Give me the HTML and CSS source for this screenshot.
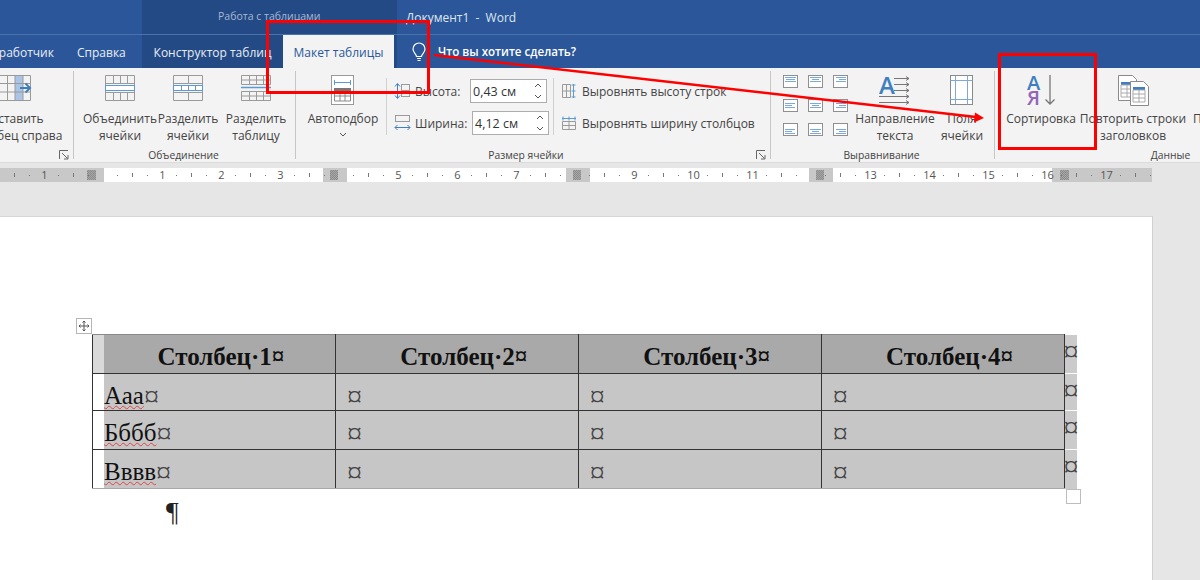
FILE: index.html
```html
<!DOCTYPE html>
<html lang="ru">
<head>
    <meta charset="UTF-8">
    <title>Документ1 - Word</title>
    <link rel="stylesheet" href="styles.css">
</head>
<body>
    <header class="titlebar">
        <div class="title-spacer"></div>
        <div class="context-label">Работа с таблицами</div>
        <div class="doc-title">Документ1 &nbsp;-&nbsp; Word</div>
    </header>

    <nav class="tabs">
        <div class="tab tab-dev">зработчик</div>
        <div class="tab tab-help">Справка</div>
        <div class="tab tab-context">Конструктор таблиц</div>
        <div class="tab tab-active">Макет таблицы</div>
        <div class="tab-end"></div>
        <svg class="bulb" width="16" height="20" viewBox="0 0 16 20" fill="none" stroke="#fff" stroke-width="1.2">
            <path d="M5.5 14.5c0-2.5-3.5-3.8-3.5-7.5a6 6 0 0 1 12 0c0 3.700-3.500 5-3.500 7.500z"/>
            <path d="M6 16.500h4M6.500 18.500h3"/>
        </svg>
        <div class="tell-me">Что вы хотите сделать?</div>
    </nav>

    <section class="ribbon">
        <div class="group group-insert">
            <div class="group-body">
                <div class="rbtn rbtn-insert">
                    <span class="rbtn-icon">
                        <svg width="34" height="28" viewBox="0 0 34 28">
                            <rect x="16" y="1" width="8" height="25" fill="#a9c4e4"/>
                            <path d="M.5.500h31v25H.5zM.5 8.500h31M.5 17h31M8.500.500v25M16 .500v25M24 .500v25" fill="none" stroke="#9a9a9a"/>
                            <path d="M21 13h10M26.500 8.500 31 13l-4.500 4.500" fill="none" stroke="#3f7fbf" stroke-width="2"/>
                        </svg>
                    </span>
                    <span class="rbtn-text">Вставить<br>столбец справа</span>
                </div>
            </div>
            <div class="group-foot">
                <span class="group-label"></span>
                <svg class="launcher" width="10" height="10" viewBox="0 0 10 10" fill="none" stroke="#666"><path d="M.5 9V.500H9M3 3l5.500 5.500M5 9h4V5"/></svg>
            </div>
        </div>

        <div class="group group-merge">
            <div class="group-body">
                <div class="rbtn">
                    <span class="rbtn-icon">
                        <svg width="30" height="26" viewBox="0 0 30 26" fill="none">
                            <path d="M.5.500h29v25H.5zM.5 8.500h29M.5 17.500h29M8.500 .500V8M15.500 .500V8M22.500 .500V8M8.500 18v7.500M15.500 18v7.500M22.500 18v7.500" stroke="#9a9a9a"/>
                            <rect x=".5" y="10.500" width="29" height="5" stroke="#5b9bd5" fill="#fff"/>
                        </svg>
                    </span>
                    <span class="rbtn-text">Объединить<br>ячейки</span>
                </div>
                <div class="rbtn">
                    <span class="rbtn-icon">
                        <svg width="30" height="26" viewBox="0 0 30 26" fill="none">
                            <path d="M.5.500h29v25H.5zM.5 8.500h29M.5 17.500h29M15.500 .500V8M15.500 18v7.500" stroke="#9a9a9a"/>
                            <rect x=".5" y="10.500" width="29" height="5" stroke="#5b9bd5" fill="#fff"/>
                            <path d="M8.500 10v6M15.500 10v6M22.500 10v6" stroke="#5b9bd5"/>
                        </svg>
                    </span>
                    <span class="rbtn-text">Разделить<br>ячейки</span>
                </div>
                <div class="rbtn">
                    <span class="rbtn-icon">
                        <svg width="30" height="26" viewBox="0 0 30 26" fill="none">
                            <path d="M.5.500h29v9H.5zM.5 16.500h29v9H.5zM.5 5h29M.5 21h29M8.500 .500v9M15.500 .500v9M22.500 .500v9M8.500 16.500v9M15.500 16.500v9M22.500 16.500v9" stroke="#9a9a9a"/>
                            <path d="M0 12.500h30" stroke="#5b9bd5" stroke-width="1.500"/>
                        </svg>
                    </span>
                    <span class="rbtn-text">Разделить<br>таблицу</span>
                </div>
            </div>
            <div class="group-foot">
                <span class="group-label">Объединение</span>
            </div>
        </div>

        <div class="group group-size">
            <div class="group-body">
                <div class="rbtn rbtn-autofit">
                    <span class="rbtn-icon">
                        <svg width="24" height="30" viewBox="0 0 24 30" fill="none">
                            <rect x=".5" y=".5" width="22" height="29" fill="#fff" stroke="#9a9a9a"/>
                            <path d="M3 7.500h17M3.500 5v5M19.500 5v5" stroke="#5b9bd5"/>
                            <rect x="3" y="13" width="17" height="3" fill="#777"/>
                            <path d="M3.500 16v10h16V16M3.500 21h16M9 16v10M14 16v10" stroke="#8a8a8a"/>
                        </svg>
                    </span>
                    <span class="rbtn-text">Автоподбор</span>
                    <svg class="chevron" width="8" height="5" viewBox="0 0 8 5" fill="none" stroke="#555"><path d="M1 1l3 3 3-3"/></svg>
                </div>
                <div class="vsep vsep-size"></div>
                <div class="size-col">
                    <div class="size-row">
                        <svg width="17" height="18" viewBox="0 0 17 18" fill="none">
                            <path d="M3.500 2v14M1 4.500l2.500-3 2.500 3M1 13.500l2.500 3 2.500-3" stroke="#3f7fbf"/>
                            <rect x="7.500" y="2.500" width="8" height="6" stroke="#9a9a9a"/>
                            <rect x="7.500" y="8.500" width="8" height="6" stroke="#9a9a9a"/>
                        </svg>
                        <span class="size-label">Высота:</span>
                        <div class="spin">0,43 см
                            <svg class="spin-arrows" width="8" height="16" viewBox="0 0 8 16" fill="none" stroke="#555"><path d="M1 4l3-3 3 3M1 12l3 3 3-3"/></svg>
                        </div>
                    </div>
                    <div class="size-row">
                        <svg width="17" height="18" viewBox="0 0 17 18" fill="none">
                            <rect x="1.500" y="1.500" width="14" height="6" stroke="#9a9a9a"/>
                            <path d="M1 13.500h15M3.500 11 1 13.500 3.500 16M13.500 11 16 13.500 13.500 16" stroke="#3f7fbf"/>
                        </svg>
                        <span class="size-label size-label-wide">Ширина:</span>
                        <div class="spin">4,12 см
                            <svg class="spin-arrows" width="8" height="16" viewBox="0 0 8 16" fill="none" stroke="#555"><path d="M1 4l3-3 3 3M1 12l3 3 3-3"/></svg>
                        </div>
                    </div>
                </div>
                <div class="vsep vsep-even"></div>
                <div class="even-col">
                    <div class="even-row">
                        <svg width="14" height="14" viewBox="0 0 14 14" fill="none">
                            <path d="M.5.500h8v13h-8zM.5 7h8M4.500.500v13" stroke="#9a9a9a"/>
                            <path d="M11.500 0v14M9.500 1h4M9.500 7h4M9.500 13h4" stroke="#5b9bd5"/>
                        </svg>
                        <span>Выровнять высоту строк</span>
                    </div>
                    <div class="even-row">
                        <svg width="14" height="14" viewBox="0 0 14 14" fill="none">
                            <path d="M.5 5.500h13v8H.5zM7 5.500v8M.5 9.500h13" stroke="#9a9a9a"/>
                            <path d="M0 2.500h14M1 .500v4M7 .500v4M13 .500v4" stroke="#5b9bd5"/>
                        </svg>
                        <span>Выровнять ширину столбцов</span>
                    </div>
                </div>
            </div>
            <div class="group-foot">
                <span class="group-label">Размер ячейки</span>
                <svg class="launcher" width="10" height="10" viewBox="0 0 10 10" fill="none" stroke="#666"><path d="M.5 9V.500H9M3 3l5.500 5.500M5 9h4V5"/></svg>
            </div>
        </div>

        <div class="group group-align">
            <div class="group-body">
                <div class="align-grid">
                    <svg class="align-icon" viewBox="0 0 15 13"><rect x=".5" y=".5" width="14" height="12"/><path d="M2 2.500h11M3 4.500h9M2 6.500h11"/></svg>
                    <svg class="align-icon" viewBox="0 0 15 13"><rect x=".5" y=".5" width="14" height="12"/><path d="M2 2.500h11M4 4.500h7M2 6.500h11"/></svg>
                    <svg class="align-icon" viewBox="0 0 15 13"><rect x=".5" y=".5" width="14" height="12"/><path d="M3 2.500h10M6 4.500h7M3 6.500h10"/></svg>
                    <svg class="align-icon" viewBox="0 0 15 13"><rect x=".5" y=".5" width="14" height="12"/><path d="M2 4.500h10M2 6.500h7M2 8.500h10"/></svg>
                    <svg class="align-icon" viewBox="0 0 15 13"><rect x=".5" y=".5" width="14" height="12"/><path d="M2 4.500h11M4 6.500h7M2 8.500h11"/></svg>
                    <svg class="align-icon" viewBox="0 0 15 13"><rect x=".5" y=".5" width="14" height="12"/><path d="M3 4.500h10M6 6.500h7M3 8.500h10"/></svg>
                    <svg class="align-icon" viewBox="0 0 15 13"><rect x=".5" y=".5" width="14" height="12"/><path d="M2 6.500h10M2 8.500h7M2 10.500h10"/></svg>
                    <svg class="align-icon" viewBox="0 0 15 13"><rect x=".5" y=".5" width="14" height="12"/><path d="M2 6.500h11M4 8.500h7M2 10.500h11"/></svg>
                    <svg class="align-icon" viewBox="0 0 15 13"><rect x=".5" y=".5" width="14" height="12"/><path d="M3 6.500h10M6 8.500h7M3 10.500h10"/></svg>
                </div>
                <div class="rbtn rbtn-direction">
                    <span class="rbtn-icon direction-icon">
                        <span class="direction-a">A</span>
                        <svg width="32" height="30" viewBox="0 0 32 30" fill="none" stroke="#777">
                            <path d="M15 3.500h15M15 9.500h15M15 15.500h15M0 21.500h30M0 27.500h30M27 1.500l3 2-3 2M27 7.500l3 2-3 2M27 13.500l3 2-3 2M27 19.500l3 2-3 2M27 25.500l3 2-3 2"/>
                        </svg>
                    </span>
                    <span class="rbtn-text">Направление<br>текста</span>
                </div>
                <div class="rbtn rbtn-margins">
                    <span class="rbtn-icon">
                        <svg width="24" height="30" viewBox="0 0 24 30" fill="none">
                            <rect x=".5" y=".5" width="22" height="29" fill="#fff" stroke="#8a8a8a"/>
                            <path d="M5.500 .500v29M17.500 .500v29M.5 5.500h22M.5 24.500h22" stroke="#7fa8d6"/>
                        </svg>
                    </span>
                    <span class="rbtn-text">Поля<br>ячейки</span>
                </div>
            </div>
            <div class="group-foot">
                <span class="group-label">Выравнивание</span>
            </div>
        </div>

        <div class="group group-data">
            <div class="group-body">
                <div class="rbtn rbtn-sort">
                    <span class="rbtn-icon sort-icon">
                        <span class="sort-letters"><span class="sort-a">А</span><span class="sort-ya">Я</span></span>
                        <svg width="10" height="30" viewBox="0 0 10 30" fill="none" stroke="#777" stroke-width="1.300"><path d="M5 0v29M.5 24.500 5 29l4.500-4.500"/></svg>
                    </span>
                    <span class="rbtn-text">Сортировка</span>
                </div>
                <div class="rbtn rbtn-repeat">
                    <span class="rbtn-icon">
                        <svg width="31" height="31" viewBox="0 0 31 31">
                            <path d="M.5.500h14l4 4v21H.5z" fill="#fff" stroke="#8a8a8a"/>
                            <rect x="3" y="7" width="12" height="3" fill="#3f7fbf"/>
                            <path d="M3 10h12v12H3zM3 14h12M3 18h12M9 10v12" fill="none" stroke="#aaa"/>
                            <path d="M12.500 6.500h13l5 5v19h-18z" fill="#fff" stroke="#8a8a8a"/>
                            <rect x="15" y="12" width="12" height="3" fill="#3f7fbf"/>
                            <path d="M15 15h12v12H15zM15 19h12M15 23h12M21 15v12" fill="none" stroke="#aaa"/>
                        </svg>
                    </span>
                    <span class="rbtn-text">Повторить строки<br>заголовков</span>
                </div>
                <div class="rbtn rbtn-next">
                    <span class="rbtn-icon"></span>
                    <span class="rbtn-text">Преобразовать</span>
                </div>
            </div>
            <div class="group-foot">
                <span class="group-label">Данные</span>
            </div>
        </div>
    </section>

    <div class="ruler">
        <div class="band band-gray band-first"><i class="band-mark"></i></div>
        <div class="band band-white band-long"></div>
        <div class="band band-gray band-gap"><i class="band-mark"></i></div>
        <div class="band band-white band-long"></div>
        <div class="band band-gray band-gap"><i class="band-mark"></i></div>
        <div class="band band-white band-long"></div>
        <div class="band band-gray band-gap"><i class="band-mark"></i></div>
        <div class="band band-white band-long"></div>
        <div class="band band-gray band-last"><i class="band-mark"></i></div>
        <div class="ruler-scale">
            <span>1</span><span></span><span>1</span><span>2</span><span>3</span><span></span><span>5</span><span>6</span><span>7</span><span></span><span>9</span><span>10</span><span>11</span><span></span><span>13</span><span>14</span><span>15</span><span>16</span><span>17</span>
        </div>
    </div>

    <main class="workspace">
        <div class="page">
            <div class="table-wrap">
                <svg class="move-handle" width="17" height="17" viewBox="0 0 17 17" fill="none">
                    <rect x=".5" y=".5" width="15" height="15" fill="#fff" stroke="#b5b5b5"/>
                    <path d="M8 3v10M3 8h10M6.500 4.500 8 3l1.500 1.500M6.500 11.500 8 13l1.500-1.500M4.500 6.500 3 8l1.500 1.500M11.500 6.500 13 8l-1.500 1.500" stroke="#555"/>
                </svg>
                <table class="doc-table">
                    <tr class="row-head">
                        <th class="col-first">Столбец·1¤</th>
                        <th>Столбец·2¤</th>
                        <th>Столбец·3¤</th>
                        <th>Столбец·4¤</th>
                        <td class="row-end"><span class="cell-mark">¤</span></td>
                    </tr>
                    <tr class="row-a">
                        <td class="col-first"><span class="spell">Ааа</span><span class="cell-mark">¤</span></td>
                        <td><span class="cell-mark">¤</span></td>
                        <td><span class="cell-mark">¤</span></td>
                        <td><span class="cell-mark">¤</span></td>
                        <td class="row-end"><span class="cell-mark">¤</span></td>
                    </tr>
                    <tr class="row-b">
                        <td class="col-first"><span class="spell">Бббб</span><span class="cell-mark">¤</span></td>
                        <td><span class="cell-mark">¤</span></td>
                        <td><span class="cell-mark">¤</span></td>
                        <td><span class="cell-mark">¤</span></td>
                        <td class="row-end"><span class="cell-mark">¤</span></td>
                    </tr>
                    <tr class="row-b">
                        <td class="col-first"><span class="spell">Вввв</span><span class="cell-mark">¤</span></td>
                        <td><span class="cell-mark">¤</span></td>
                        <td><span class="cell-mark">¤</span></td>
                        <td><span class="cell-mark">¤</span></td>
                        <td class="row-end"><span class="cell-mark">¤</span></td>
                    </tr>
                </table>
                <div class="resize-handle"></div>
            </div>
            <p class="pilcrow">¶</p>
        </div>
    </main>

    <!-- red marks drawn over the screenshot -->
    <div class="mark mark-tab"></div>
    <div class="mark mark-sort"></div>
    <svg class="mark-arrow" width="1200" height="580" viewBox="0 0 1200 580">
        <path d="M434 55 976 117" stroke="#f00" stroke-width="2.500"/>
        <path d="M984 118 975 112.500 974 122.500z" fill="#f00"/>
    </svg>
</body>
</html>
```

FILE: styles.css
```css
* {
    margin: 0;
    padding: 0;
    box-sizing: border-box;
}

body {
    position: relative;
    width: 1200px;
    height: 580px;
    overflow: hidden;
    background-color: #e6e6e6;
    font-family: "Open Sans", "Noto Sans", sans-serif;
    font-size: 12px;
    color: #444;
}

/* title bar */
.titlebar {
    display: flex;
    height: 35px;
    background-color: #2b579a;
    border-bottom: 1px solid #4a72ad;
}

.title-spacer {
    width: 142px;
}

.context-label {
    width: 255px;
    padding-top: 9px;
    padding-left: 76px;
    background-color: #234a84;
    color: #a5b8d6;
    font-size: 10.5px;
}

.doc-title {
    padding-left: 9px;
    padding-top: 9px;
    color: #dfe6f1;
    font-size: 12px;
}

/* tabs */
.tabs {
    display: flex;
    align-items: center;
    height: 33px;
    background-color: #2b579a;
    color: #e8edf5;
}

.tab {
    display: flex;
    align-items: center;
    justify-content: center;
    height: 100%;
    padding-top: 1px;
    white-space: nowrap;
}

.tab-dev {
    width: 84px;
    margin-left: -7px;
    justify-content: flex-start;
}

.tab-help {
    width: 65px;
    justify-content: flex-start;
}

.tab-context {
    width: 141px;
    background-color: #234a84;
}

.tab-active {
    width: 111px;
    background-color: #f3f3f3;
    color: #2b579a;
}

.tab-end {
    width: 3px;
    height: 100%;
    background-color: #234a84;
}

.bulb {
    margin-left: 14px;
}

.tell-me {
    margin-left: 11px;
    color: #fff;
    font-weight: 600;
    font-size: 11.6px;
}

/* ribbon */
.ribbon {
    display: flex;
    height: 95px;
    overflow: hidden;
    background-color: #f3f3f3;
    border-bottom: 1px solid #dcdcdc;
}

.group {
    display: flex;
    flex-direction: column;
    flex-shrink: 0;
    height: 100%;
    background-image: linear-gradient(#c6c6c6, #c6c6c6);
    background-position: right 3px;
    background-size: 1px 88px;
    background-repeat: no-repeat;
}

.group-insert { width: 74px; }
.group-merge { width: 222px; }
.group-size { width: 475px; }
.group-align { width: 224px; }
.group-data { width: 354px; background-image: none; }

.group-body {
    display: flex;
    flex: 1;
    padding-top: 6px;
    min-height: 0;
}

.group-foot {
    display: flex;
    align-items: center;
    height: 18px;
    padding-top: 3px;
    padding-right: 3px;
}

.group-label {
    flex: 1;
    text-align: center;
    font-size: 10.3px;
}

.launcher {
    margin-right: 2px;
    flex-shrink: 0;
}

.rbtn {
    display: flex;
    flex-direction: column;
    align-items: center;
    flex-shrink: 0;
    width: 68px;
}

.rbtn-icon {
    display: flex;
    align-items: flex-start;
    justify-content: center;
    height: 36px;
    padding-top: 1px;
}

.rbtn-text {
    white-space: nowrap;
    text-align: center;
    line-height: 17px;
}

.rbtn-insert {
    margin-left: -17px;
}

.rbtn-insert .rbtn-icon {
    margin-left: -2px;
}

.group-merge .group-body {
    padding-left: 12px;
}

.rbtn-autofit {
    width: 72px;
    margin-left: 11px;
}

.chevron {
    margin-top: 5px;
}

.vsep {
    width: 1px;
    height: 57px;
    margin-top: 4px;
    background-color: #d0d0d0;
}

.vsep-size { margin-left: 7px; }
.vsep-even { margin-left: 4px; }

.size-col,
.even-col {
    display: flex;
    flex-direction: column;
    gap: 8px;
    margin-top: 5px;
}

.size-col { margin-left: 7px; }
.even-col { margin-left: 8px; }

.size-row,
.even-row {
    display: flex;
    align-items: center;
    height: 24px;
    white-space: nowrap;
}

.even-row svg {
    margin-right: 6px;
}

.size-label {
    width: 55px;
    margin-left: 4px;
}

.size-label-wide {
    width: 57px;
}

.spin {
    display: flex;
    align-items: center;
    justify-content: space-between;
    width: 77px;
    height: 100%;
    padding: 0 4px 0 2px;
    background-color: #fff;
    border: 1px solid #adadad;
    color: #333;
    font-size: 12.5px;
}

/* align buttons */
.align-grid {
    display: grid;
    grid-template-columns: repeat(3, 15px);
    grid-auto-rows: 13px;
    gap: 11px 10px;
    height: 63px;
    margin-top: 1px;
    margin-left: 12px;
}

.align-icon {
    display: block;
    width: 15px;
    height: 13px;
    fill: #fff;
    stroke: #8f8f8f;
}

.align-icon path {
    stroke: #7aa9dc;
}

.rbtn-direction {
    width: 80px;
    margin-left: 7px;
}

.direction-icon {
    position: relative;
    width: 32px;
}

.direction-a {
    position: absolute;
    left: 0;
    top: -3px;
    color: #3f7fbf;
    font-size: 24px;
    font-weight: 600;
    line-height: 28px;
}

.rbtn-margins {
    width: 50px;
    margin-left: 2px;
}

/* sort */
.group-data .group-body {
    padding-left: 11px;
}

.rbtn-sort {
    width: 70px;
}

.sort-icon {
    gap: 3px;
    padding-top: 1px;
}

.sort-letters {
    display: flex;
    flex-direction: column;
    align-items: center;
    margin-right: 2px;
    font-weight: 600;
    font-size: 20px;
    line-height: 15px;
}

.sort-a { color: #3f7fbf; }
.sort-ya { color: #9466b8; }

.rbtn-repeat {
    width: 108px;
    margin-left: 3px;
}

.rbtn-next {
    align-items: flex-start;
    margin-left: 6px;
    width: 100px;
}

/* ruler */
.ruler {
    position: relative;
    display: flex;
    height: 14px;
    margin-top: 5px;
}

.band {
    display: flex;
    align-items: center;
    flex-shrink: 0;
    height: 100%;
}

.band-gray { background-color: #c8c8c8; }
.band-white { background-color: #fff; }
.band-first { width: 104px; padding-left: 87px; }
.band-long { width: 219px; }
.band-gap { width: 24px; padding-left: 7px; }
.band-last { width: 100px; padding-left: 8px; }

.band-mark {
    display: block;
    width: 8px;
    height: 10px;
    background: repeating-conic-gradient(#8c8c8c 0 25%, #a6a6a6 0 50%) 0 0 / 2px 2px;
}

.band-first .band-mark,
.band-last .band-mark {
    width: 9px;
}

.ruler-scale {
    position: absolute;
    left: 0;
    top: 0;
    width: 1152px;
    height: 100%;
    display: flex;
    padding-left: 15px;
    font-size: 11px;
    line-height: 14px;
    color: #555;
    background-image:
        linear-gradient(90deg, transparent 14px, #777 14px, #777 15px, transparent 15px, transparent 44px, #777 44px, #777 45px, transparent 45px),
        linear-gradient(90deg, transparent 29px, #777 29px, #777 30px, transparent 30px);
    background-size: 59px 1px, 59px 4px;
    background-position: 44px 7px, 44px 5px;
    background-repeat: repeat-x;
}

.ruler-scale span {
    flex: 0 0 59px;
    text-align: center;
}

/* document */
.workspace {
    padding-top: 34px;
}

.page {
    width: 1153px;
    height: 364px;
    padding-top: 117px;
    padding-left: 92px;
    background-color: #fff;
    border-top: 1px solid #d6d6d6;
    border-right: 1px solid #d0d0d0;
}

.table-wrap {
    position: relative;
    width: 988px;
}

.move-handle {
    position: absolute;
    left: -16px;
    top: -16px;
}

.resize-handle {
    position: absolute;
    left: 974px;
    top: 155px;
    width: 15px;
    height: 15px;
    background-color: #fff;
    border: 1px solid #bdbdbd;
}

.doc-table {
    width: 985px;
    table-layout: fixed;
    border-collapse: collapse;
    font-family: "Liberation Serif", serif;
    font-size: 25px;
    line-height: 28px;
    color: #111;
}

.doc-table th,
.doc-table td {
    padding: 8px 0 0 11px;
    vertical-align: top;
    text-align: left;
    background-color: #c6c6c6;
    border: 1px solid #333;
    white-space: nowrap;
}

.doc-table th {
    padding-left: 14px;
    text-align: center;
    background-color: #a9a9a9;
    border-top-color: #8a8a8a;
}

.doc-table tr:last-of-type td {
    border-bottom-color: #a8a8a8;
}

.doc-table td.col-first {
    box-shadow: inset 11px 0 0 #fff;
}

.doc-table th.col-first {
    box-shadow: inset 11px 0 0 #d9d9d9;
}

.doc-table .row-end {
    width: 13px;
    padding: 2px 0 0;
    border: 0;
    border-top: 1px solid #fff;
    background-color: #cbcbcb;
}

.row-head { height: 39px; }
.row-a { height: 37px; }
.row-b { height: 39px; }

.cell-mark {
    font-size: 30px;
    line-height: 0;
    vertical-align: -2px;
    color: #444;
}

.row-end .cell-mark {
    margin-left: -1px;
}

.spell {
    text-decoration: underline wavy #d44;
    text-decoration-thickness: 1.300px;
    text-underline-offset: 1px;
    text-decoration-skip-ink: none;
}

.pilcrow {
    margin-left: 74px;
    margin-top: 5px;
    font-family: "Liberation Serif", serif;
    font-size: 28px;
    line-height: 36px;
    color: #222;
}

/* red annotation */
.mark {
    position: absolute;
    border: 3px solid #f00;
}

.mark-tab {
    left: 266px;
    top: 20px;
    width: 164px;
    height: 74px;
}

.mark-sort {
    left: 998px;
    top: 53px;
    width: 99px;
    height: 97px;
}

.mark-arrow {
    position: absolute;
    left: 0;
    top: 0;
}
```
